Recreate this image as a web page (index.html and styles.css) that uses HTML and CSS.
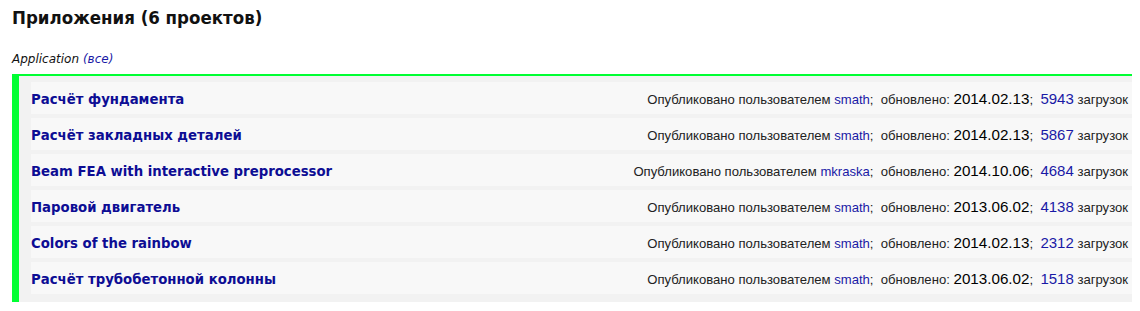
FILE: index.html
```html
<!DOCTYPE html>
<html lang="ru">
<head>
<meta charset="utf-8">
<title>Приложения</title>
<link rel="stylesheet" href="styles.css">
</head>
<body>
<h1 class="title">Приложения (6 проектов)</h1>
<div class="category"><i>Application</i> <a href="#">(все)</a></div>
<div class="box">
  <div class="row"><a class="name" href="#">Расчёт фундамента</a><span class="meta">Опубликовано пользователем <a href="#">smath</a>;&nbsp; обновлено: <span class="date">2014.02.13</span>;&nbsp; <a class="num" href="#">5943</a> загрузок</span></div>
  <div class="row"><a class="name" href="#">Расчёт закладных деталей</a><span class="meta">Опубликовано пользователем <a href="#">smath</a>;&nbsp; обновлено: <span class="date">2014.02.13</span>;&nbsp; <a class="num" href="#">5867</a> загрузок</span></div>
  <div class="row"><a class="name" href="#">Beam FEA with interactive preprocessor</a><span class="meta">Опубликовано пользователем <a href="#">mkraska</a>;&nbsp; обновлено: <span class="date">2014.10.06</span>;&nbsp; <a class="num" href="#">4684</a> загрузок</span></div>
  <div class="row"><a class="name" href="#">Паровой двигатель</a><span class="meta">Опубликовано пользователем <a href="#">smath</a>;&nbsp; обновлено: <span class="date">2013.06.02</span>;&nbsp; <a class="num" href="#">4138</a> загрузок</span></div>
  <div class="row"><a class="name" href="#">Colors of the rainbow</a><span class="meta">Опубликовано пользователем <a href="#">smath</a>;&nbsp; обновлено: <span class="date">2014.02.13</span>;&nbsp; <a class="num" href="#">2312</a> загрузок</span></div>
  <div class="row"><a class="name" href="#">Расчёт трубобетонной колонны</a><span class="meta">Опубликовано пользователем <a href="#">smath</a>;&nbsp; обновлено: <span class="date">2013.06.02</span>;&nbsp; <a class="num" href="#">1518</a> загрузок</span></div>
</div>
</body>
</html>
```
FILE: styles.css
```css
html, body { margin: 0; padding: 0; background: #fff; }
body {
  padding: 0 8px 0 12px;
  font-family: "DejaVu Sans", Verdana, sans-serif;
  color: #111;
}
a { text-decoration: none; color: #1a1aa6; }
.title {
  margin: 0;
  padding-top: 6px;
  font-family: "DejaVu Sans Condensed", "DejaVu Sans", sans-serif;
  font-size: 18.5px;
  line-height: 24px;
  font-weight: bold;
  color: #111;
}
.category {
  margin-top: 21px;
  font-size: 12px;
  line-height: 16px;
  font-family: "DejaVu Sans", sans-serif;
}
.category a { font-style: italic; color: #1a1aa6; }
.box {
  margin-top: 7px;
  border-top: 2px solid #00ff33;
  border-left: 7px solid #00ff33;
  background: #f2f2f2;
  padding: 6px 0 8px 12px;
  display: flex;
  flex-direction: column;
  gap: 4px;
}
.row {
  height: 32px;
  background: #f8f8f8;
  display: flex;
  align-items: center;
  justify-content: space-between;
  padding-right: 4px;
}
.name {
  font-family: "DejaVu Sans Condensed", "DejaVu Sans", sans-serif;
  font-size: 14.75px;
  font-weight: bold;
  color: #0d0d94;
}
.meta {
  font-family: "Liberation Sans", Arial, sans-serif;
  font-size: 13.1px;
  color: #222;
}
.meta a { color: #1a1aa6; }
.date { font-size: 15.2px; color: #000; }
.num { font-size: 15px; }
```
